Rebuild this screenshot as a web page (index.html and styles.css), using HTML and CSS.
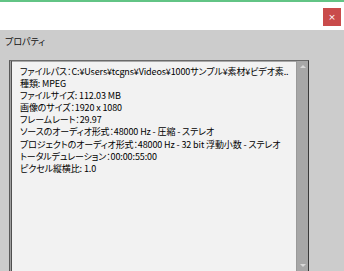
FILE: index.html
```html
<!DOCTYPE html>
<html lang="ja">
<head>
<meta charset="utf-8">
<link rel="stylesheet" href="styles.css">
</head>
<body>
<div class="window">
  <div class="header">
    <div class="close">×</div>
  </div>
  <div class="panel">
    <div class="title">プロパティ</div>
    <div class="box">
      <div class="lines">
        <div class="line">ファイルパス：C:¥Users¥tcgns¥Videos¥1000サンプル¥素材¥ビデオ素..</div>
        <div class="line">種類: MPEG</div>
        <div class="line">ファイルサイズ: 112.03 MB</div>
        <div class="line">画像のサイズ：1920 x 1080</div>
        <div class="line">フレームレート：29.97</div>
        <div class="line">ソースのオーディオ形式：48000 Hz - 圧縮 - ステレオ</div>
        <div class="line">プロジェクトのオーディオ形式：48000 Hz - 32 bit 浮動小数 - ステレオ</div>
        <div class="line">トータルデュレーション：00:00:55:00</div>
        <div class="line">ピクセル縦横比: 1.0</div>
      </div>
      <div class="scrollbar">
        <div class="arrow up"></div>
        <div class="arrow down"></div>
      </div>
    </div>
  </div>
</div>
</body>
</html>
```
FILE: styles.css
```css
html, body {
  margin: 0;
  padding: 0;
}
body {
  width: 344px;
  height: 271px;
  overflow: hidden;
  font-family: "Noto Sans CJK JP", "Noto Sans", sans-serif;
  color: #111;
}
.window {
  display: flex;
  flex-direction: column;
  height: 271px;
}
.header {
  height: 28px;
  border-top: 2px solid #62c485;
  background: #ffffff;
  display: flex;
  justify-content: flex-end;
  align-items: flex-start;
}
.close {
  margin-top: 6px;
  margin-right: 3px;
  width: 18px;
  height: 18px;
  background: #c94b4b;
  color: #fff;
  font-family: "DejaVu Sans", sans-serif;
  font-size: 9px;
  line-height: 18px;
  text-align: center;
}
.panel {
  flex: 1;
  background: #cccccc;
  padding: 6px 0 0 0;
  display: flex;
  flex-direction: column;
  min-height: 0;
}
.title {
  padding-left: 5px;
  font-size: 9px;
  line-height: 12px;
  height: 12px;
  font-feature-settings: "palt";
  color: #111;
}
.box {
  margin: 12px 0 0 9px;
  width: 300px;
  flex: 1;
  background: #f2f2f2;
  border-left: 1px solid #5a5a5a;
  border-top: 1px solid #6a6a6a;
  border-right: 1px solid #3a3a3a;
  box-shadow: inset 1px 0 0 #a0a0a0, inset 2px 0 0 #505050, inset 0 1px 0 #a8a8a8;
  display: flex;
  box-sizing: border-box;
}
.lines {
  flex: 1;
  padding: 5px 0 0 10px;
  font-size: 9px;
  line-height: 12.1px;
  letter-spacing: -0.12px;
  font-feature-settings: "palt";
  white-space: nowrap;
  overflow: hidden;
  color: #000;
}
.scrollbar {
  width: 11px;
  background: #a7a7a7;
  border-left: 1px solid #9a9a9a;
  position: relative;
}
.arrow {
  position: absolute;
  left: 3px;
  width: 0;
  height: 0;
  border-left: 3px solid transparent;
  border-right: 3px solid transparent;
}
.arrow.up {
  top: 4px;
  border-bottom: 3px solid #d8d8d8;
}
.arrow.down {
  bottom: 4px;
  border-top: 3px solid #d8d8d8;
}
```
